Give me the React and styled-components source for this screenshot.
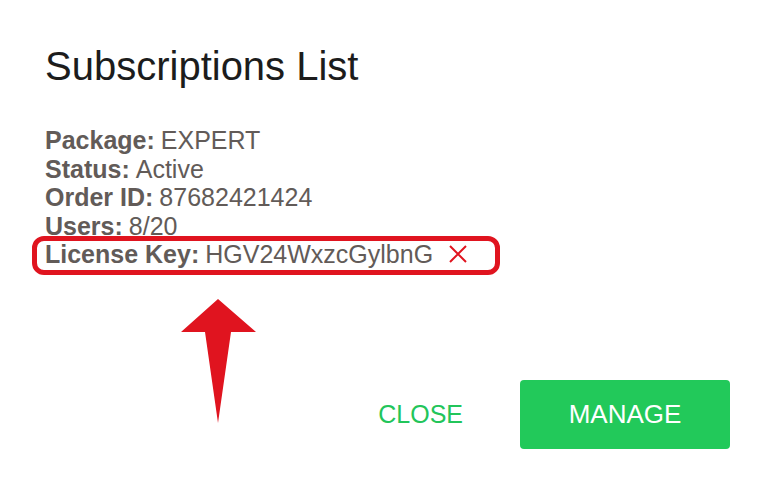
import React from "react";
import styled, { createGlobalStyle } from "styled-components";

const Global = createGlobalStyle`
  html, body { margin: 0; padding: 0; background: #ffffff; }
  body { font-family: "Liberation Sans", Arial, Helvetica, sans-serif; }
`;

const Page = styled.div`
  position: relative;
  width: 773px;
  height: 483px;
  box-sizing: border-box;
  padding: 42px 43px 0 45px;
  overflow: hidden;
`;

const Title = styled.h1`
  margin: 0;
  font-size: 40px;
  line-height: 48px;
  font-weight: 400;
  color: #1c1c1c;
`;

const InfoList = styled.div`
  margin-top: 36px;
  display: flex;
  flex-direction: column;
  align-items: flex-start;
`;

const Row = styled.div`
  position: relative;
  display: inline-flex;
  align-items: center;
  font-size: 25px;
  line-height: 28.5px;
  color: #625b58;
  white-space: nowrap;
  ${(p) =>
    p.$highlight &&
    `
    &::after {
      content: "";
      position: absolute;
      left: -13px;
      right: -33px;
      top: -4px;
      bottom: -6px;
      border: 5px solid #e0141f;
      border-radius: 12px;
      pointer-events: none;
    }
  `}
`;

const Label = styled.b`
  font-weight: 700;
  margin-right: 6px;
`;

const RemoveIcon = styled.svg`
  margin-left: 16px;
  width: 18px;
  height: 18px;
  flex: none;
`;

const Arrow = styled.svg`
  position: absolute;
  left: 180px;
  top: 298px;
  width: 78px;
  height: 126px;
`;

const Footer = styled.div`
  margin-top: 111px;
  display: flex;
  justify-content: flex-end;
  align-items: center;
  gap: 57px;
`;

const TextButton = styled.button`
  background: none;
  border: none;
  padding: 0;
  font-family: inherit;
  font-size: 25px;
  color: #22c55a;
  cursor: pointer;
`;

const PrimaryButton = styled.button`
  width: 210px;
  height: 69px;
  border: none;
  border-radius: 4px;
  background: #22c95a;
  color: #ffffff;
  font-family: inherit;
  font-size: 26px;
  cursor: pointer;
`;

const rows = [
  ["Package:", "EXPERT"],
  ["Status:", "Active"],
  ["Order ID:", "87682421424"],
  ["Users:", "8/20"],
];

export default function App() {
  return (
    <>
      <Global />
      <Page>
        <Title>Subscriptions List</Title>
        <InfoList>
          {rows.map(([l, v]) => (
            <Row key={l}>
              <Label>{l}</Label>
              {v}
            </Row>
          ))}
          <Row $highlight>
            <Label>License Key:</Label>
            HGV24WxzcGylbnG
            <RemoveIcon viewBox="0 0 18 18">
              <path d="M1 1 L17 17 M17 1 L1 17" stroke="#e0141f" strokeWidth="2" fill="none" />
            </RemoveIcon>
          </Row>
        </InfoList>
        <Arrow viewBox="180 298 78 126">
          <polygon
            points="218,299 256,332 231,332 218,423 205,332 181,332"
            fill="#e0141f"
          />
        </Arrow>
        <Footer>
          <TextButton>CLOSE</TextButton>
          <PrimaryButton>MANAGE</PrimaryButton>
        </Footer>
      </Page>
    </>
  );
}
